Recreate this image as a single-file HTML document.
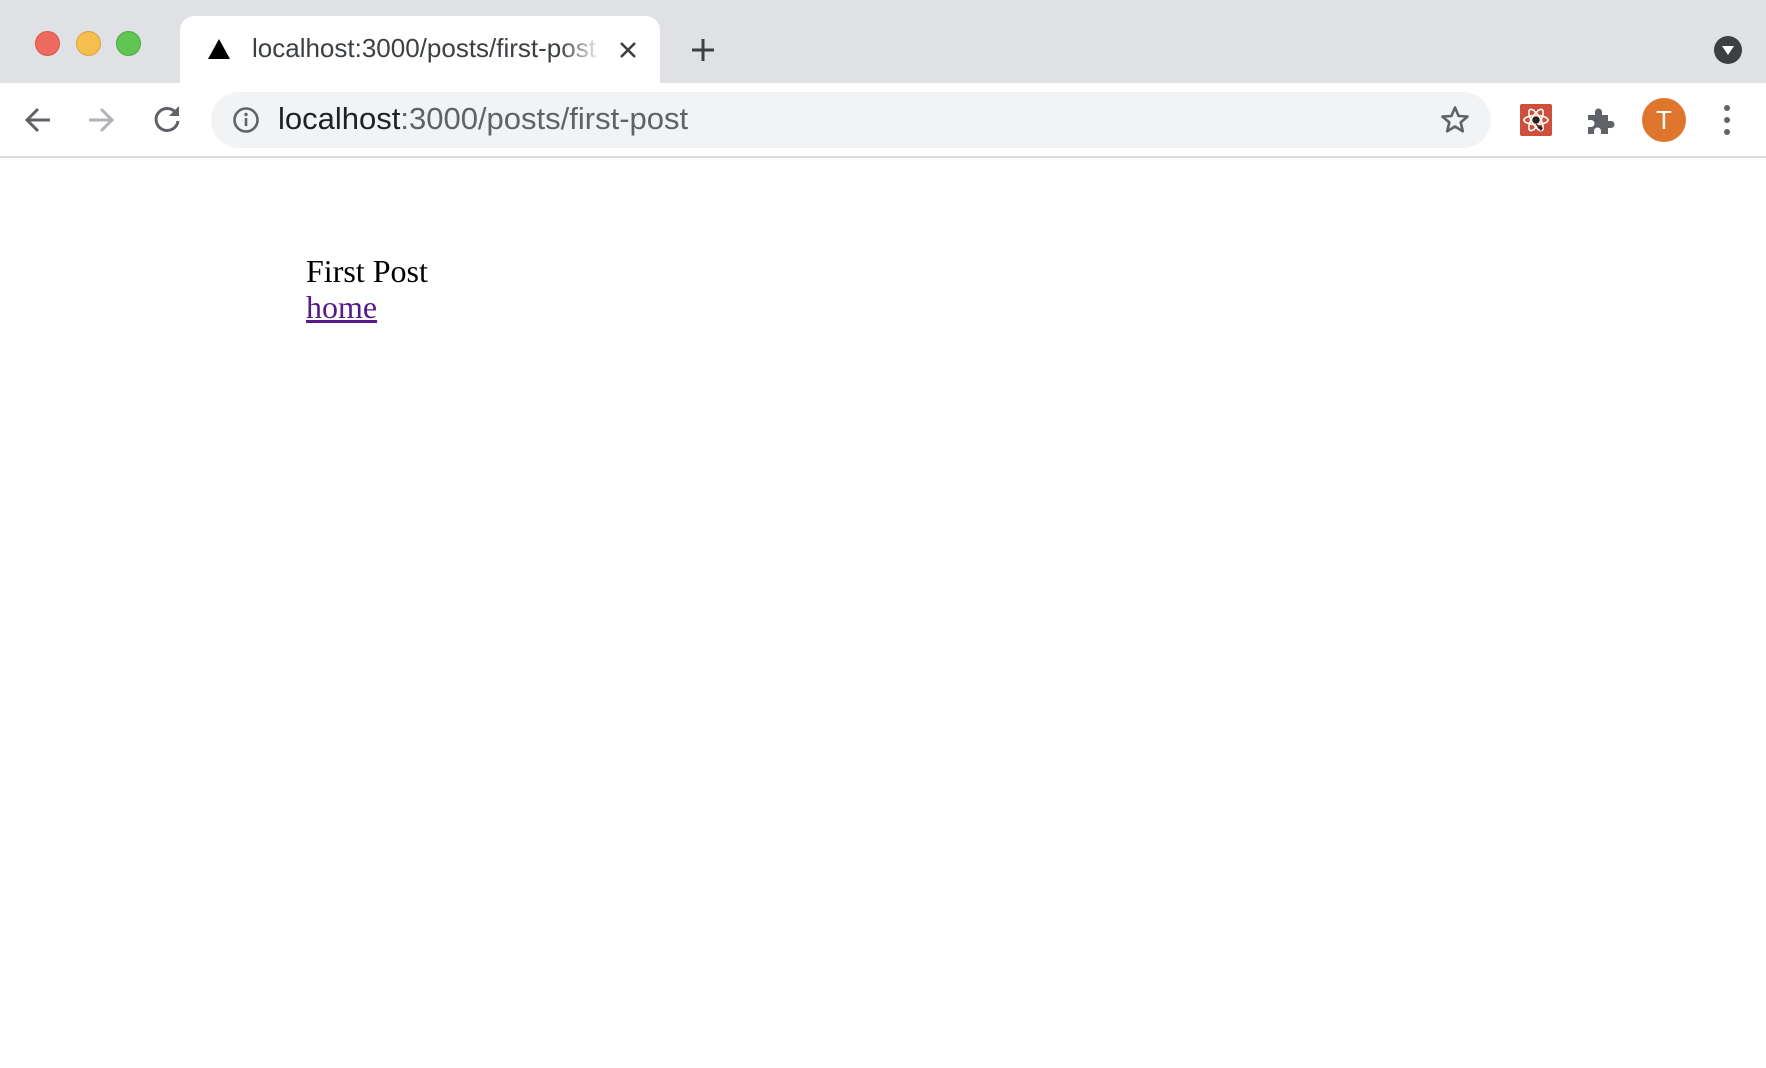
<!DOCTYPE html>
<html><head><meta charset="utf-8"><style>
html,body{margin:0;padding:0;width:1766px;height:1068px;overflow:hidden;background:#fff;font-family:"Liberation Sans",sans-serif}
.tabbar{position:absolute;left:0;top:0;width:1766px;height:83px;background:#dfe1e5}
.dot{position:absolute;top:31px;width:24px;height:24px;border-radius:50%}
.tab{position:absolute;left:180px;top:16px;width:480px;height:67px;background:#fff;border-radius:14px 14px 0 0}
.tabtext{position:absolute;left:72px;top:17px;font-size:26px;color:#3c4043;white-space:nowrap;width:350px;overflow:hidden;-webkit-mask-image:linear-gradient(to right,#000 88%,transparent 100%)}
.toolbar{position:absolute;left:0;top:83px;width:1766px;height:73px;background:#fff;border-bottom:2px solid #dadce0}
.url{position:absolute;left:211px;top:9px;width:1280px;height:56px;background:#f1f3f4;border-radius:28px}
.urltext{position:absolute;left:67px;top:9px;font-size:31px;color:#202124;white-space:nowrap}
.urltext span{color:#5f6368}
.content{position:absolute;left:306px;top:253px;font-family:"Liberation Serif",serif;font-size:32px;line-height:36px;color:#000}
.content a{color:#551a8b;text-decoration:underline}
</style></head><body>
<div class="tabbar">
<div class="dot" style="left:35px;background:#ed6a5e;border:1px solid #d8554a;width:23px;height:23px"></div>
<div class="dot" style="left:76px;background:#f5bf4f;border:1px solid #d9a43a;width:23px;height:23px"></div>
<div class="dot" style="left:116px;background:#61c554;border:1px solid #4caa40;width:23px;height:23px"></div>
<div class="tab">
<svg style="position:absolute;left:27px;top:22px" width="24" height="22" viewBox="0 0 24 22"><path d="M12 1 L23 21 L1 21 Z" fill="#000"/></svg>
<div class="tabtext">localhost:3000/posts/first-post</div>
<svg style="position:absolute;left:438px;top:24px" width="20" height="20" viewBox="0 0 20 20"><path d="M3 3L17 17M17 3L3 17" stroke="#3c4043" stroke-width="2.6"/></svg>
</div>
<svg style="position:absolute;left:691px;top:38px" width="24" height="24" viewBox="0 0 24 24"><path d="M12 1V23M1 12H23" stroke="#3c4043" stroke-width="3"/></svg>
<svg style="position:absolute;left:1714px;top:36px" width="28" height="28" viewBox="0 0 28 28"><circle cx="14" cy="14" r="14" fill="#3c4043"/><path d="M8 10H20L14 19Z" fill="#fff"/></svg>
</div>
<div class="toolbar">
<svg style="position:absolute;left:23px;top:22px" width="30" height="30" viewBox="0 0 30 30"><path d="M27 15H5M15 4L4 15L15 26" stroke="#5f6368" stroke-width="3" fill="none"/></svg>
<svg style="position:absolute;left:86px;top:22px" width="30" height="30" viewBox="0 0 30 30"><path d="M3 15H25M15 4L26 15L15 26" stroke="#b0b3b8" stroke-width="3" fill="none"/></svg>
<svg style="position:absolute;left:152px;top:21px" width="30" height="30" viewBox="0 0 30 30"><path d="M24 9A11 11 0 1 0 26 17" stroke="#5f6368" stroke-width="3" fill="none"/><path d="M27 2V12H17Z" fill="#5f6368"/></svg>
<div class="url">
<svg style="position:absolute;left:21px;top:14px" width="28" height="28" viewBox="0 0 28 28"><circle cx="14" cy="14" r="11.5" stroke="#5f6368" stroke-width="2.6" fill="none"/><path d="M14 12V20" stroke="#5f6368" stroke-width="2.6"/><circle cx="14" cy="8.5" r="1.7" fill="#5f6368"/></svg>
<div class="urltext">localhost<span>:3000/posts/first-post</span></div>
<svg style="position:absolute;left:1229px;top:13px" width="30" height="30" viewBox="0 0 30 30"><path d="M15 2.5L18.6 11L27.5 11.6L20.7 17.4L22.8 26.3L15 21.5L7.2 26.3L9.3 17.4L2.5 11.6L11.4 11Z" stroke="#5f6368" stroke-width="2.6" fill="none" stroke-linejoin="round"/></svg>
</div>
<div style="position:absolute;left:1520px;top:21px;width:32px;height:32px;background:#cf4f3d;border-radius:2px">
<svg width="32" height="32" viewBox="0 0 32 32"><ellipse cx="16" cy="16" rx="12" ry="4.5" stroke="#fff" stroke-width="1.6" fill="none"/><ellipse cx="16" cy="16" rx="12" ry="4.5" stroke="#fff" stroke-width="1.6" fill="none" transform="rotate(60 16 16)"/><ellipse cx="16" cy="16" rx="12" ry="4.5" stroke="#fff" stroke-width="1.6" fill="none" transform="rotate(-60 16 16)"/><circle cx="16" cy="16" r="3.5" fill="#222"/><path d="M15 19L21 27L23 24Z" fill="#222"/></svg></div>
<svg style="position:absolute;left:1584px;top:22px" width="32" height="32" viewBox="0 0 32 32"><path d="M4 10H11V7A3.5 3.5 0 0 1 18 7V10H24V16H27A3.5 3.5 0 0 1 27 23H24V29H17V26A3.5 3.5 0 0 0 10 26V29H4V22H7A3.5 3.5 0 0 0 7 15H4Z" fill="#5f6368"/></svg>
<div style="position:absolute;left:1642px;top:15px;width:44px;height:44px;border-radius:50%;background:#e0752d;color:#fff;font-size:26px;text-align:center;line-height:44px">T</div>
<svg style="position:absolute;left:1720px;top:20px" width="14" height="34" viewBox="0 0 14 34"><circle cx="7" cy="5" r="3" fill="#5f6368"/><circle cx="7" cy="17" r="3" fill="#5f6368"/><circle cx="7" cy="29" r="3" fill="#5f6368"/></svg>
</div>
<div class="content">First Post<br><a>home</a></div>
</body></html>
